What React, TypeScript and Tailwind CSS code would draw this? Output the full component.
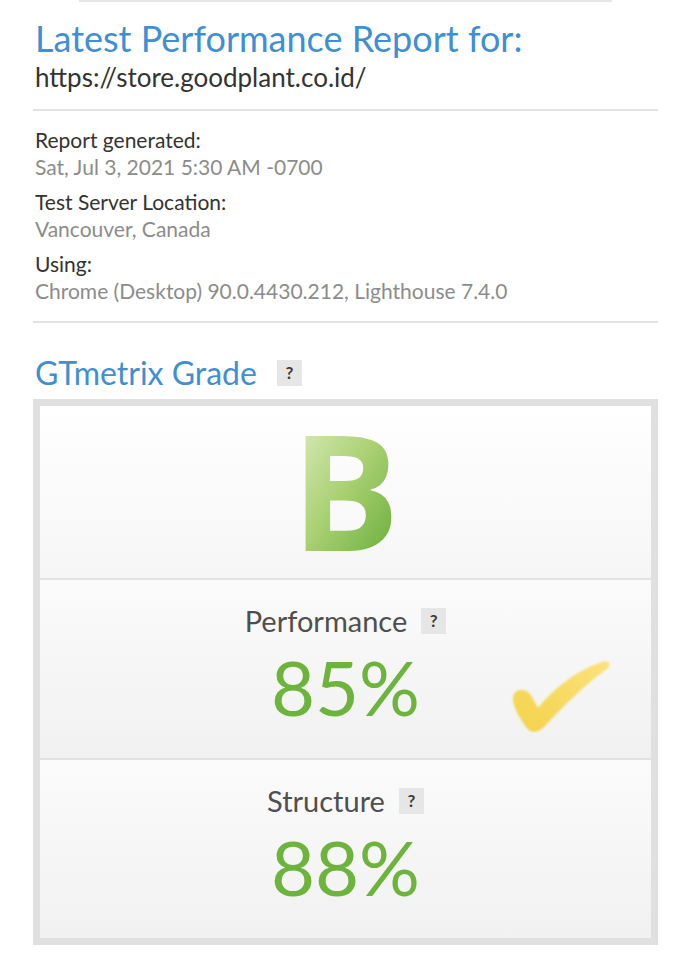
import React from "react";

const font = { fontFamily: "Lato, 'Open Sans', sans-serif" };

function HelpTag({ className = "" }: { className?: string }) {
  return (
    <span
      className={`inline-flex h-[26px] w-[25px] items-center justify-center bg-[#e6e6e6] text-[17px] font-bold text-[#3a3a3a] ${className}`}
    >
      ?
    </span>
  );
}

function InfoItem({ label, value }: { label: string; value: string }) {
  return (
    <div>
      <p className="text-[21px] leading-[27px] text-[#333]">{label}</p>
      <p className="text-[21px] leading-[27px] text-[#8c8c8c]">{value}</p>
    </div>
  );
}

function Check() {
  return (
    <svg viewBox="0 0 100 75" className="h-[75px] w-[100px]">
      <defs>
        <linearGradient id="chk" x1="0" y1="1" x2="1" y2="0">
          <stop offset="0" stopColor="#f4d24a" />
          <stop offset="1" stopColor="#fbe27c" />
        </linearGradient>
        <filter id="soft">
          <feGaussianBlur stdDeviation="1.2" />
        </filter>
      </defs>
      <path
        filter="url(#soft)"
        fill="url(#chk)"
        d="M2 42 C1 31 13 28 20 37 L27 50 C42 31 66 12 91 4 C98 1 101 7 96 11 C73 27 52 49 34 68 C28 75 19 76 15 69 C9 60 3 51 2 42 Z"
      />
    </svg>
  );
}

function ScoreRow({
  label,
  value,
  children,
}: {
  label: string;
  value: string;
  children?: React.ReactNode;
}) {
  return (
    <div className="relative flex h-[180px] flex-col items-center border-t-2 border-[#e2e2e2] bg-gradient-to-b from-[#fbfbfb] to-[#f1f1f1] pt-[22px]">
      <div className="flex items-center gap-[14px]">
        <span className="text-[29px] leading-[38px] text-[#4f4f4f]">{label}</span>
        <HelpTag />
      </div>
      <p className="mt-[2px] text-[76px] leading-[90px] text-[#6cb43c]">{value}</p>
      {children}
    </div>
  );
}

export default function App() {
  return (
    <div className="min-h-[960px] bg-white" style={font}>
      <div className="mx-[79px] h-[2px] bg-[#e6e6e6]" />
      <div className="px-[33px]">
        <h1 className="mt-[15px] pl-[2px] text-[36px] leading-[42px] text-[#3f8fd2]">
          Latest Performance Report for:
        </h1>
        <p className="mt-[2px] pl-[2px] text-[26px] leading-[32px] text-[#333]">
          https://store.goodplant.co.id/
        </p>
        <div className="mt-[16px] h-[2px] bg-[#e3e3e3]" />

        <div className="flex flex-col gap-[8px] pl-[2px] pt-[15px]">
          <InfoItem label="Report generated:" value="Sat, Jul 3, 2021 5:30 AM -0700" />
          <InfoItem label="Test Server Location:" value="Vancouver, Canada" />
          <InfoItem
            label="Using:"
            value="Chrome (Desktop) 90.0.4430.212, Lighthouse 7.4.0"
          />
        </div>
        <div className="mt-[17px] h-[2px] bg-[#e3e3e3]" />

        <div className="mt-[30px] flex items-center gap-[20px] pl-[2px]">
          <h2 className="text-[32px] leading-[40px] text-[#3f8fd2]">GTmetrix Grade</h2>
          <HelpTag />
        </div>

        <div className="mt-[6px] border-[7px] border-[#e0e0e0] bg-white">
          <div className="flex h-[172px] items-center justify-center bg-gradient-to-b from-white to-[#f6f6f6] pb-[8px]">
            <span
              className="bg-gradient-to-br from-[#e3efc4] via-[#a9d072] to-[#5ea92e] bg-clip-text text-[162px] font-bold leading-none text-transparent"
              style={{ fontFamily: "'Open Sans', Lato, sans-serif" }}
            >
              B
            </span>
          </div>
          <ScoreRow label="Performance" value="85%">
            <div className="absolute left-[471px] top-[78px]">
              <Check />
            </div>
          </ScoreRow>
          <ScoreRow label="Structure" value="88%" />
        </div>
      </div>
    </div>
  );
}
